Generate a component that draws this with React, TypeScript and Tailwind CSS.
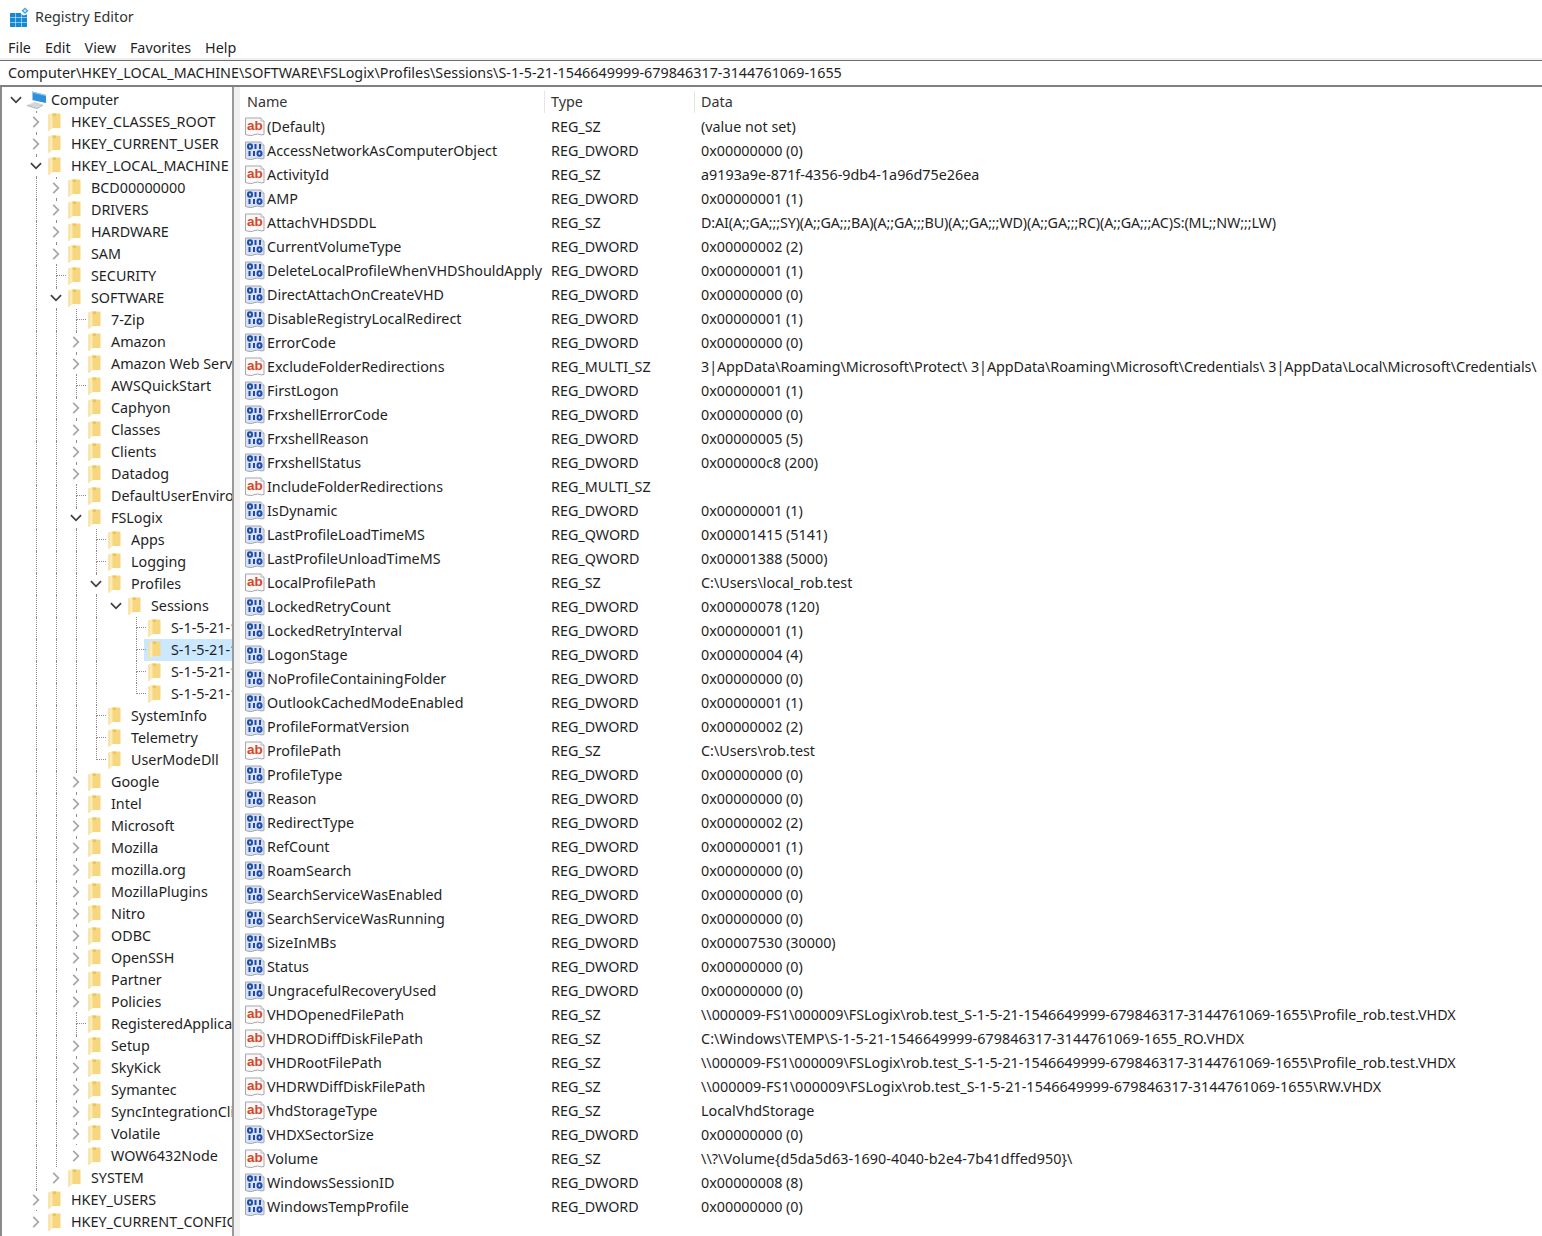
import type { ReactNode } from "react";

type Node = { name: string; open?: boolean; leaf?: boolean; selected?: boolean; children?: Node[] };

const closed = (name: string): Node => ({ name });
const leaf = (name: string): Node => ({ name, leaf: true });

const tree: Node[] = [
  closed("HKEY_CLASSES_ROOT"),
  closed("HKEY_CURRENT_USER"),
  {
    name: "HKEY_LOCAL_MACHINE",
    open: true,
    children: [
      closed("BCD00000000"),
      closed("DRIVERS"),
      closed("HARDWARE"),
      closed("SAM"),
      leaf("SECURITY"),
      {
        name: "SOFTWARE",
        open: true,
        children: [
          leaf("7-Zip"),
          closed("Amazon"),
          closed("Amazon Web Services"),
          leaf("AWSQuickStart"),
          closed("Caphyon"),
          closed("Classes"),
          closed("Clients"),
          closed("Datadog"),
          leaf("DefaultUserEnvironment"),
          {
            name: "FSLogix",
            open: true,
            children: [
              leaf("Apps"),
              leaf("Logging"),
              {
                name: "Profiles",
                open: true,
                children: [
                  {
                    name: "Sessions",
                    open: true,
                    children: [
                      leaf("S-1-5-21-1546649999"),
                      { name: "S-1-5-21-1546649999", leaf: true, selected: true },
                      leaf("S-1-5-21-1546649999"),
                      leaf("S-1-5-21-1546649999"),
                    ],
                  },
                ],
              },
              leaf("SystemInfo"),
              leaf("Telemetry"),
              leaf("UserModeDll"),
            ],
          },
          closed("Google"),
          closed("Intel"),
          closed("Microsoft"),
          closed("Mozilla"),
          closed("mozilla.org"),
          closed("MozillaPlugins"),
          closed("Nitro"),
          closed("ODBC"),
          closed("OpenSSH"),
          closed("Partner"),
          closed("Policies"),
          leaf("RegisteredApplications"),
          closed("Setup"),
          closed("SkyKick"),
          closed("Symantec"),
          closed("SyncIntegrationClients"),
          closed("Volatile"),
          closed("WOW6432Node"),
        ],
      },
      closed("SYSTEM"),
    ],
  },
  closed("HKEY_USERS"),
  closed("HKEY_CURRENT_CONFIG"),
];

const values: [string, string, string][] = [
  ["(Default)", "REG_SZ", "(value not set)"],
  ["AccessNetworkAsComputerObject", "REG_DWORD", "0x00000000 (0)"],
  ["ActivityId", "REG_SZ", "a9193a9e-871f-4356-9db4-1a96d75e26ea"],
  ["AMP", "REG_DWORD", "0x00000001 (1)"],
  ["AttachVHDSDDL", "REG_SZ", "D:AI(A;;GA;;;SY)(A;;GA;;;BA)(A;;GA;;;BU)(A;;GA;;;WD)(A;;GA;;;RC)(A;;GA;;;AC)S:(ML;;NW;;;LW)"],
  ["CurrentVolumeType", "REG_DWORD", "0x00000002 (2)"],
  ["DeleteLocalProfileWhenVHDShouldApply", "REG_DWORD", "0x00000001 (1)"],
  ["DirectAttachOnCreateVHD", "REG_DWORD", "0x00000000 (0)"],
  ["DisableRegistryLocalRedirect", "REG_DWORD", "0x00000001 (1)"],
  ["ErrorCode", "REG_DWORD", "0x00000000 (0)"],
  ["ExcludeFolderRedirections", "REG_MULTI_SZ", "3|AppData\\Roaming\\Microsoft\\Protect\\ 3|AppData\\Roaming\\Microsoft\\Credentials\\ 3|AppData\\Local\\Microsoft\\Credentials\\"],
  ["FirstLogon", "REG_DWORD", "0x00000001 (1)"],
  ["FrxshellErrorCode", "REG_DWORD", "0x00000000 (0)"],
  ["FrxshellReason", "REG_DWORD", "0x00000005 (5)"],
  ["FrxshellStatus", "REG_DWORD", "0x000000c8 (200)"],
  ["IncludeFolderRedirections", "REG_MULTI_SZ", ""],
  ["IsDynamic", "REG_DWORD", "0x00000001 (1)"],
  ["LastProfileLoadTimeMS", "REG_QWORD", "0x00001415 (5141)"],
  ["LastProfileUnloadTimeMS", "REG_QWORD", "0x00001388 (5000)"],
  ["LocalProfilePath", "REG_SZ", "C:\\Users\\local_rob.test"],
  ["LockedRetryCount", "REG_DWORD", "0x00000078 (120)"],
  ["LockedRetryInterval", "REG_DWORD", "0x00000001 (1)"],
  ["LogonStage", "REG_DWORD", "0x00000004 (4)"],
  ["NoProfileContainingFolder", "REG_DWORD", "0x00000000 (0)"],
  ["OutlookCachedModeEnabled", "REG_DWORD", "0x00000001 (1)"],
  ["ProfileFormatVersion", "REG_DWORD", "0x00000002 (2)"],
  ["ProfilePath", "REG_SZ", "C:\\Users\\rob.test"],
  ["ProfileType", "REG_DWORD", "0x00000000 (0)"],
  ["Reason", "REG_DWORD", "0x00000000 (0)"],
  ["RedirectType", "REG_DWORD", "0x00000002 (2)"],
  ["RefCount", "REG_DWORD", "0x00000001 (1)"],
  ["RoamSearch", "REG_DWORD", "0x00000000 (0)"],
  ["SearchServiceWasEnabled", "REG_DWORD", "0x00000000 (0)"],
  ["SearchServiceWasRunning", "REG_DWORD", "0x00000000 (0)"],
  ["SizeInMBs", "REG_DWORD", "0x00007530 (30000)"],
  ["Status", "REG_DWORD", "0x00000000 (0)"],
  ["UngracefulRecoveryUsed", "REG_DWORD", "0x00000000 (0)"],
  ["VHDOpenedFilePath", "REG_SZ", "\\\\000009-FS1\\000009\\FSLogix\\rob.test_S-1-5-21-1546649999-679846317-3144761069-1655\\Profile_rob.test.VHDX"],
  ["VHDRODiffDiskFilePath", "REG_SZ", "C:\\Windows\\TEMP\\S-1-5-21-1546649999-679846317-3144761069-1655_RO.VHDX"],
  ["VHDRootFilePath", "REG_SZ", "\\\\000009-FS1\\000009\\FSLogix\\rob.test_S-1-5-21-1546649999-679846317-3144761069-1655\\Profile_rob.test.VHDX"],
  ["VHDRWDiffDiskFilePath", "REG_SZ", "\\\\000009-FS1\\000009\\FSLogix\\rob.test_S-1-5-21-1546649999-679846317-3144761069-1655\\RW.VHDX"],
  ["VhdStorageType", "REG_SZ", "LocalVhdStorage"],
  ["VHDXSectorSize", "REG_DWORD", "0x00000000 (0)"],
  ["Volume", "REG_SZ", "\\\\?\\Volume{d5da5d63-1690-4040-b2e4-7b41dffed950}\\"],
  ["WindowsSessionID", "REG_DWORD", "0x00000008 (8)"],
  ["WindowsTempProfile", "REG_DWORD", "0x00000000 (0)"],
];

// Noto's ; | and \ aren't as wide as Segoe's, so a few long values need nudging
const dataTracking: Record<string, string> = {
  AttachVHDSDDL: "tracking-[-0.125px]",
  ExcludeFolderRedirections: "tracking-[-0.05px]",
  VHDRODiffDiskFilePath: "tracking-[0.08px]",
  VHDRWDiffDiskFilePath: "tracking-[0.065px]",
  Volume: "tracking-[0.08px]",
};

function AppIcon() {
  return (
    <svg width="20" height="20" viewBox="0 0 20 20" className="shrink-0">
      <path d="M1 6h5.500v4.500H1zM7 6h5v4.500H7zM1 11h5.500v4H1zM7 11h5v4H7zM12.500 11h5.500v4h-5.500zM1 15.500h5.500V20H1zM7 15.500h5V20H7zM12.500 15.500h5.500V20h-5.500z" fill="#1789d4" />
      <path d="M12.500 7l2 1.500 3.500-1v3h-5.500z" fill="#1789d4" />
      <path d="M16 0.500l3.500 3.200L16 7l-3.500-3.300z" fill="#4aa6de" />
      <path d="M16 2.300l1.500 1.400L16 5.200l-1.500-1.500z" fill="#cfe8f7" />
    </svg>
  );
}

function ComputerIcon() {
  return (
    <svg width="20" height="20" viewBox="0 0 20 20" className="shrink-0">
      <path d="M6 1.500l14 3.500v8L6 10z" fill="#2f8fd8" />
      <path d="M6 1.500l14 3.500-.5 1L7 3v7l-1 0z" fill="#8cc8f0" />
      <path d="M1 15l8-3 8 2.500-6 3.500z" fill="#d3d7da" />
      <path d="M1 15l10 3 6-3.500v1l-6 3.500L1 16z" fill="#a5adb3" />
    </svg>
  );
}

function FolderIcon() {
  return (
    <svg width="16" height="20" viewBox="0 0 16 20" className="shrink-0">
      <path d="M6 1.500h8.500V16H6z" fill="#f6d77f" />
      <path d="M6 1.500h4v2.500h-4z" fill="#edc458" />
      <path d="M2.500 2.500L6.500 1v15.500L2.500 19z" fill="#fcebb6" />
      <path d="M2.500 2.500L3.500 2v16.500l-1 .5z" fill="#f3d88e" />
    </svg>
  );
}

function Chevron({ open }: { open?: boolean }) {
  if (open) {
    return (
      <svg width="12" height="12" viewBox="0 0 13 13" className="shrink-0">
        <path d="M1 3.500L6.500 9 12 3.500" fill="none" stroke="#404040" strokeWidth="1.900" />
      </svg>
    );
  }
  return (
    <svg width="12" height="12" viewBox="0 0 13 13" className="shrink-0">
      <path d="M3.500 1L9 6.500 3.500 12" fill="none" stroke="#a6a6a6" strokeWidth="1.900" />
    </svg>
  );
}

function PageIcon({ children, fill }: { children: ReactNode; fill: string }) {
  return (
    <svg width="20" height="20" viewBox="0 0 20 20" className="shrink-0">
      <path d="M0.500 1h15.500L19 4V17.500c-3 1.500-5.500-1.500-9 0s-6.500 1-9.500 0z" fill={fill} stroke="#a3a7ad" strokeWidth="1" />
      <path d="M16 1v3h3" fill="#fff" stroke="#a3a7ad" strokeWidth="0.800" />
      {children}
    </svg>
  );
}

function StringIcon() {
  return (
    <PageIcon fill="#fdf8f6">
      <text x="2" y="13" fontSize="13.500" fontWeight="700" fontFamily="'Liberation Sans', sans-serif" fill="#d5462b">
        ab
      </text>
    </PageIcon>
  );
}

function BinaryIcon() {
  return (
    <PageIcon fill="#d9e2f5">
      <g fill="none" stroke="#1f49a8" strokeWidth="2">
        <ellipse cx="5" cy="5.500" rx="2" ry="2.200" />
        <path d="M10.500 3v5M15 3v5M4.500 10v5M9 10v5" />
        <ellipse cx="14.500" cy="12.500" rx="2" ry="2.200" />
      </g>
    </PageIcon>
  );
}

function Guide({ show }: { show: boolean }) {
  return (
    <div className="w-5 h-full shrink-0">
      {show && <div className="ml-[10px] h-full border-l border-dotted border-[#8c8c8c]" />}
    </div>
  );
}

function Connector({ hasNext }: { hasNext: boolean }) {
  return (
    <div className="w-5 h-full shrink-0 flex flex-col">
      <div className="ml-[10px] h-[11px] border-l border-b border-dotted border-[#8c8c8c]" />
      {hasNext && <div className="ml-[10px] flex-1 border-l border-dotted border-[#8c8c8c]" />}
    </div>
  );
}

function Expander({ open }: { open?: boolean }) {
  return (
    <div className="w-5 h-full shrink-0 flex items-center justify-center">
      <div className="h-[18px] w-3 bg-white flex items-center justify-center">
        <Chevron open={open} />
      </div>
    </div>
  );
}

function TreeRow({ node, guides, hasNext }: { node: Node; guides: boolean[]; hasNext: boolean }) {
  return (
    <>
      <div className="flex h-[22px] items-center whitespace-nowrap">
        {guides.map((g, i) => (
          <Guide key={i} show={g} />
        ))}
        <div className="relative w-5 h-full shrink-0">
          {node.leaf ? (
            <Connector hasNext={hasNext} />
          ) : (
            <>
              {hasNext && <div className="ml-[10px] h-full border-l border-dotted border-[#8c8c8c]" />}
              <div className="absolute inset-0">
                <Expander open={node.open} />
              </div>
            </>
          )}
        </div>
        <div
          className={`-ml-[2px] flex h-full flex-1 items-center pl-[2px] ${node.selected ? "bg-[#cce8ff]" : ""}`}
        >
          <FolderIcon />
          <span className="ml-[9px]">{node.name}</span>
        </div>
      </div>
      {node.open &&
        node.children?.map((c, i) => (
          <TreeRow
            key={i}
            node={c}
            guides={[...guides, hasNext]}
            hasNext={i < (node.children?.length ?? 0) - 1}
          />
        ))}
    </>
  );
}

function TreePane() {
  return (
    <div className="w-[232px] shrink-0 overflow-hidden border-l-2 border-[#8a8a8a] pl-1 pt-[2px]">
      <div className="flex h-[22px] items-center whitespace-nowrap">
        <div className="w-5 h-full shrink-0 flex items-center justify-center">
          <Chevron open />
        </div>
        <div className="flex items-center">
          <ComputerIcon />
          <span className="ml-[5px]">Computer</span>
        </div>
      </div>
      {tree.map((n, i) => (
        <TreeRow key={i} node={n} guides={[false]} hasNext={i < tree.length - 1} />
      ))}
    </div>
  );
}

function ListPane() {
  return (
    <div className="flex-1 min-w-0 overflow-hidden pt-[1px]">
      <div className="flex h-[27px] items-center text-[#333]">
        <div className="w-[305px] pl-[7px] h-[22px] flex items-center border-r border-[#e5e5e5]">Name</div>
        <div className="w-[150px] pl-[6px] h-[22px] flex items-center border-r border-[#e5e5e5]">Type</div>
        <div className="pl-[6px]">Data</div>
      </div>
      {values.map(([name, type, data]) => (
        <div key={name} className="flex h-6 items-center whitespace-nowrap">
          <div className="w-[305px] shrink-0 flex items-center pl-[5px]">
            {type.includes("SZ") ? <StringIcon /> : <BinaryIcon />}
            <span className="ml-[2px]">{name}</span>
          </div>
          <div className="w-[150px] shrink-0 pl-[6px]">{type}</div>
          <div className={`pl-[6px] ${dataTracking[name] ?? ""}`}>{data}</div>
        </div>
      ))}
    </div>
  );
}

export default function App() {
  return (
    <div className="h-[1236px] w-[1542px] overflow-hidden bg-white text-[14.330px] text-[#1f1f1f] font-['Noto_Sans','Open_Sans',sans-serif] flex flex-col">
      <div className="flex h-[34px] items-center pl-[9px] shrink-0">
        <AppIcon />
        <span className="ml-[6px] text-[#333]">Registry Editor</span>
      </div>
      <div className="flex h-[26px] items-center gap-[14px] pl-2 pt-[3px] border-b-2 border-[#f0f0f0] shrink-0">
        <span>File</span>
        <span>Edit</span>
        <span>View</span>
        <span>Favorites</span>
        <span>Help</span>
      </div>
      <div className="h-[27px] flex items-center pl-2 border-t border-b-2 border-t-[#6d6d6d] border-b-[#808080] shrink-0 whitespace-nowrap">
        Computer\HKEY_LOCAL_MACHINE\SOFTWARE\FSLogix\Profiles\Sessions\S-1-5-21-1546649999-679846317-3144761069-1655
      </div>
      <div className="flex flex-1 min-h-0">
        <TreePane />
        <div className="w-[8px] shrink-0 border-l-2 border-[#9a9a9a] bg-[#f0f0f0]" />
        <ListPane />
      </div>
    </div>
  );
}
